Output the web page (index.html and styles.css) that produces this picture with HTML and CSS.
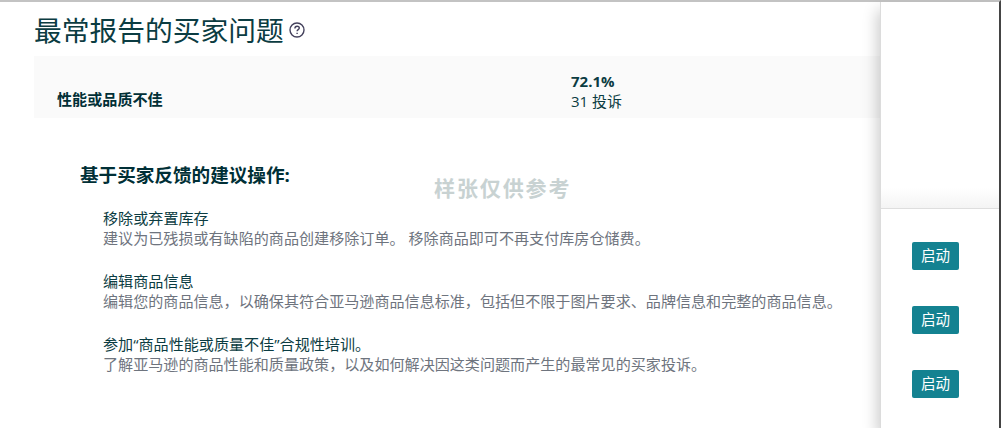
FILE: index.html
```
<!DOCTYPE html>
<html lang="zh-CN">

<head>
    <meta charset="UTF-8" />
    <title>最常报告的买家问题</title>
    <link rel="stylesheet" href="styles.css">
</head>

<body>
    <div class="page">
        <div class="main">
            <div class="title">
                <h1>最常报告的买家问题</h1>
                <svg class="help" viewBox="0 0 16 16" width="16" height="16">
                    <circle cx="8" cy="8" r="7" />
                    <path d="M5.9 6.4C5.9 5 6.8 4.2 8.1 4.2s2.2.8 2.2 1.9c0 1.5-2.2 1.6-2.2 3.2" />
                    <path d="M8.1 10.7v1.4" />
                </svg>
            </div>
            <div class="summary">
                <div class="reason">性能或品质不佳</div>
                <div class="stat">
                    <strong>72.1%</strong>
                    <span>31 投诉</span>
                </div>
            </div>
            <div class="actions">
                <h2>基于买家反馈的建议操作:</h2>
                <ul>
                    <li>
                        <h3>移除或弃置库存</h3>
                        <p>建议为已残损或有缺陷的商品创建移除订单。 移除商品即可不再支付库房仓储费。</p>
                    </li>
                    <li>
                        <h3>编辑商品信息</h3>
                        <p>编辑您的商品信息，以确保其符合亚马逊商品信息标准，包括但不限于图片要求、品牌信息和完整的商品信息。</p>
                    </li>
                    <li>
                        <h3>参加“商品性能或质量不佳”合规性培训。</h3>
                        <p>了解亚马逊的商品性能和质量政策，以及如何解决因这类问题而产生的最常见的买家投诉。</p>
                    </li>
                </ul>
            </div>
            <div class="watermark">样张仅供参考</div>
        </div>
        <div class="side">
            <div class="side-top"></div>
            <div class="side-buttons">
                <button class="btn">启动</button>
                <button class="btn">启动</button>
                <button class="btn">启动</button>
            </div>
        </div>
    </div>
</body>

</html>
```
FILE: styles.css
```
* {
    box-sizing: border-box;
    margin: 0;
    padding: 0;
}

body {
    background: #fff;
    color: #0b3c42;
    font-family: "Open Sans", "Noto Sans CJK SC", sans-serif;
    font-size: 15.1px;
    overflow: hidden;
}

.page {
    display: flex;
    height: 428px;
    border-top: 2px solid #c3c3c3;
    border-right: 2px solid #484848;
}

.main {
    position: relative;
    flex: 1;
    padding-left: 34px;
}

.title {
    display: flex;
    align-items: center;
    gap: 5px;
    height: 54px;
    padding-top: 2px;
}

.title h1 {
    font-size: 27.75px;
    font-weight: 400;
    line-height: 40px;
    color: #0b3c42;
}

.help {
    fill: none;
    stroke: #44415c;
    stroke-width: 1.4;
}

.summary {
    display: flex;
    height: 62px;
    padding-left: 23px;
    background: #fafafa;
}

.reason {
    width: 514px;
    padding-top: 33px;
    font-weight: bold;
    line-height: 20px;
    color: #002f36;
}

.stat {
    padding-top: 15px;
    font-size: 15px;
    line-height: 20px;
}

.stat strong,
.stat span {
    display: block;
}

.actions {
    padding: 44px 0 0 46px;
}

.actions h2 {
    font-size: 18.6px;
    line-height: 26px;
    color: #002f36;
}

.actions ul {
    padding: 20px 0 0 23px;
    list-style: none;
}

.actions li {
    height: 63px;
    line-height: 21px;
    white-space: nowrap;
}

.actions h3 {
    font-size: 15.1px;
    font-weight: normal;
}

.actions p {
    font-size: 15.08px;
    line-height: 19px;
    color: #6e747e;
}

/* stamp over the list */
.watermark {
    position: absolute;
    left: 434px;
    top: 171px;
    font-size: 21px;
    font-weight: bold;
    line-height: 30px;
    letter-spacing: 1.9px;
    color: #c8d2d2;
}

.side {
    display: flex;
    flex-direction: column;
    width: 119px;
    background: #fff;
    border-left: 1px solid #dcdcdc;
    box-shadow: -3px 8px 14px rgba(0, 0, 0, 0.2);
    z-index: 1;
}

.side-top {
    height: 206px;
    background: linear-gradient(#fff 90%, #f4f4f4);
}

.side-buttons {
    display: flex;
    flex: 1;
    flex-direction: column;
    align-items: flex-start;
    gap: 36.4px;
    padding: 32.6px 0 0 31px;
    border-top: 1px solid #dedede;
}

.btn {
    width: 47px;
    height: 28px;
    border: 0;
    border-radius: 2px;
    background: #148291;
    color: #fff;
    font-family: inherit;
    font-size: 14.5px;
    line-height: 26px;
}
```
